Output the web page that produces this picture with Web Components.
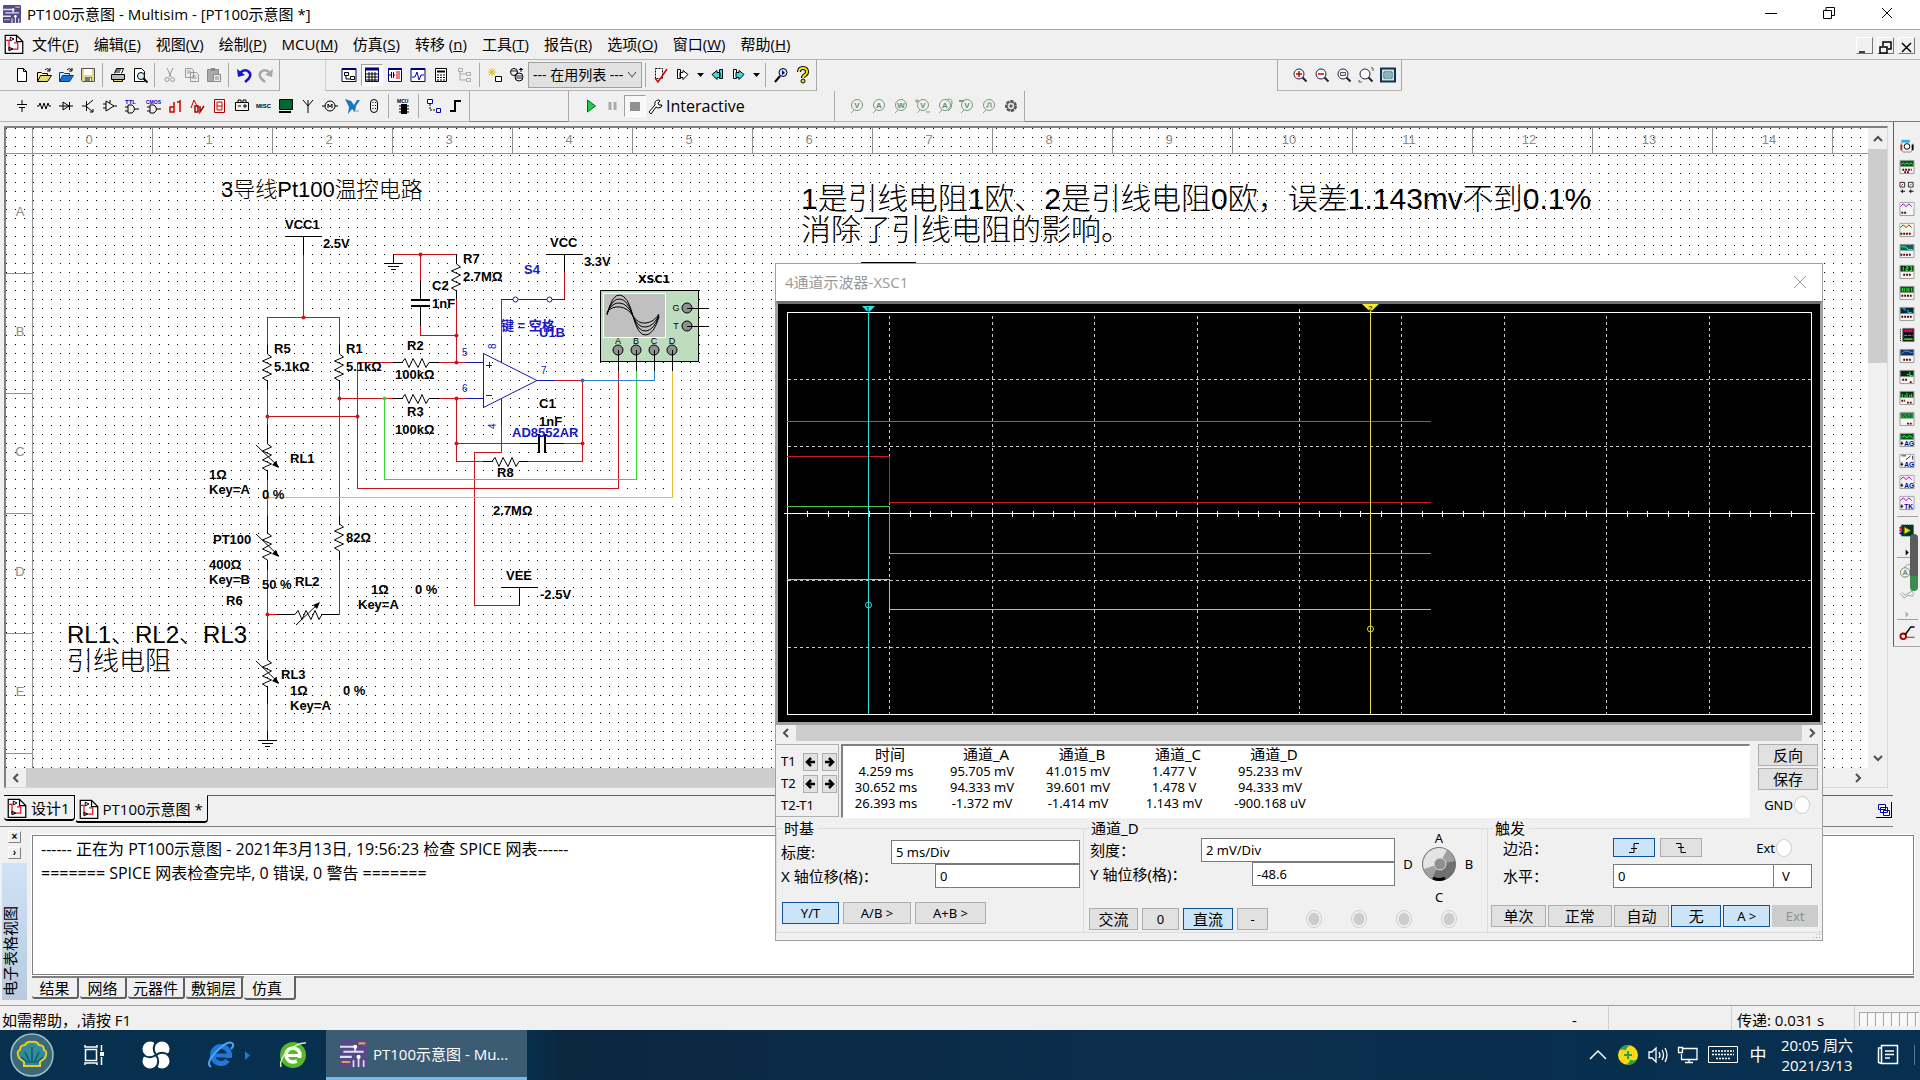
<!DOCTYPE html>
<html lang="zh-CN">
<head>
<meta charset="utf-8">
<title>PT100示意图 - Multisim</title>
<style>
    html, body {
        margin: 0;
        height: 100%;
        overflow: hidden;
    }
    body {
        background-color: #F0F0F0;
        color: #000;
        font: 15px/20px "Open Sans", "Noto Sans CJK SC", sans-serif;
    }
</style>
</head>
<body>
<app-shell></app-shell>

<script>
const S = 'stroke="#000" fill="none"';

/** Small instrument front panel: a screen with terminals or letters below */
const meter = (screen, trace, foot) => `
    <path d="M.5 1.5h15v14h-15z" fill="#F4F4F4" stroke="#999"/>
    <path d="M1 2h14v6H1z" fill="${screen}"/>
    <path d="${trace[0]}" stroke="${trace[1]}" fill="none"/>
    ${foot.length < 3
        ? `<text x="5" y="15" font-size="7" font-weight="700" fill="#00A">${foot}</text><path d="M1 12h3M2.500 10v4" ${S}/>`
        : `<path d="${foot}" stroke="#600" fill="none" stroke-width="2" stroke-dasharray="2 1"/>`}`;

const probe = (letter, extra = '') => `
    <circle cx="8" cy="7" r="5.5" stroke="#7C9A7C" fill="none"/>
    <text x="8" y="10" text-anchor="middle" font-size="8" font-weight="700" fill="#6C8A6C">${letter}</text>
    <path d="M5 12l-3 3" stroke="#999"/>${extra}`;

const zoomIcon = mark => `
    <circle cx="7" cy="7" r="5" fill="#FFF" stroke="#224"/><path d="M10.500 10.500l4 4" stroke="#224" stroke-width="2"/>${mark}`;

const doc = `
    <path d="M1 1h9l5 5v9.500H1z" fill="#FFF" stroke="#000"/><path d="M10 1v5h5" ${S}/>
    <path d="M1 5h3v7h4M8 12h3V7H8" stroke="#E01020" fill="none"/><path d="M5 2.500l3 1.500-3 1.500zM4 10.500l3 1.500-3 1.500z" fill="none" stroke="#000" stroke-width=".800"/>`;

/** 16x16 drawings, by name */
const ICONS = {
    doc,
    chip: `
        <rect width="16" height="16" rx="1" fill="#544A86"/>
        <path d="M0 4h9M2 7h12M0 10h7M9 4v3" stroke="#E6DDF4" stroke-width="1.200"/>
        <path d="M1 13h5M11 2h4" stroke="#E0A060" stroke-width="1.200"/><path d="M8 16v-4M11 16v-6M14 16v-4" stroke="#E6DDF4"/>
        <circle cx="9" cy="4" r="1.200" fill="#FFF"/><circle cx="11" cy="10" r="1.200" fill="#FFF"/>`,
    new: `<path d="M3.500 1.500h6l3 3v10h-9zM9.500 1.500v3h3" fill="#FFF" stroke="#000"/>`,
    open: `<path d="M1.500 14.500v-9h4l1 1h5v2" fill="#FFF6A0" stroke="#000"/><path d="M1.500 14.500l3-6h11l-4 6z" fill="#E4DC78" stroke="#000"/><path d="M9 3q3-3 5 1m0-3v3h-3" ${S}/>`,
    openBlue: `<path d="M1.500 14.500v-9h4l1 1h5v2" fill="#CFE6FF" stroke="#003C8C"/><path d="M1.500 14.500l3-6h11l-4 6z" fill="#1474DC" stroke="#003C8C"/><path d="M9 3q3-3 5 1m0-3v3h-3" ${S}/>`,
    save: `<path d="M1.500 1.500h13v13h-12l-1-1z" fill="#E0D68C" stroke="#555"/><path d="M4 2h8v6H4z" fill="#FFF"/><path d="M5 10h7v4H5z" fill="#777"/><path d="M10 11h1v3h-1z" fill="#FFF"/>`,
    print: `<path d="M4.500 6.500l2-5h7l-2 5" fill="#FFF" stroke="#000"/><path d="M1.500 7.500h13v5h-13z" fill="#BBB" stroke="#000"/><path d="M3.500 12.500h9v2h-9z" fill="#E6D76A" stroke="#000"/><path d="M6 3h5M5 5h5" ${S}/>`,
    preview: `<path d="M2.500 1.500h7l3 3v10h-10z" fill="#FFF" stroke="#000"/><circle cx="9" cy="9" r="3.500" fill="#D8ECF4" stroke="#000"/><path d="M11.500 11.500l4 4" stroke="#000" stroke-width="2"/>`,
    cut: `<path d="M5 1l4 9M11 1L7 10" stroke="#999"/><circle cx="5" cy="12.500" r="2" stroke="#999" fill="none"/><circle cx="10.500" cy="12.500" r="2" stroke="#999" fill="none"/>`,
    copy: `<path d="M1.500 1.500h6l2 2v7h-8zM6.500 5.500h6l2 2v7h-8z" fill="#EEE" stroke="#999"/><path d="M3 4h4M3 6h4M8 9h4M8 11h5" stroke="#999"/>`,
    paste: `<path d="M1.500 2.500h11v12h-11z" fill="#AAA" stroke="#888"/><path d="M5 1h4v3H5z" fill="#888"/><path d="M7.500 7.500h7v7h-7z" fill="#EEE" stroke="#888"/><path d="M9 10h4M9 12h4" stroke="#888"/>`,
    undo: `<path d="M1 2l1 8 7-2z" fill="#1414C8"/><path d="M4 6q5-5 9-1t-4 10" stroke="#1414C8" fill="none" stroke-width="2.500"/>`,
    redo: `<path d="M15 2l-1 8-7-2z" fill="#A8A8A8"/><path d="M12 6q-5-5-9-1t4 10" stroke="#A8A8A8" fill="none" stroke-width="2.500"/>`,
    hierarchy: `<path d="M1 1.500h14v13H1z" fill="#FFF" stroke="#00007C"/><path d="M1 2h14" stroke="#00007C" stroke-width="2"/><path d="M3.500 5.500h4v3h-4zM9.500 9.500h4v3h-4zM5 9v3h4" ${S}/>`,
    grid: `<path d="M1.500 1.500h13v13h-13z" fill="#FFF" stroke="#00007C"/><path d="M1 2h14" stroke="#00007C" stroke-width="3"/><path d="M2 7h12M2 10h12M2 13h12M5 5v9M8 5v9M11 5v9" ${S}/>`,
    database: `<path d="M1.500 1.500h13v13h-13z" fill="#FFF" stroke="#00007C"/><path d="M1 2h14" stroke="#00007C" stroke-width="2"/><path d="M2 8h2M4.500 5v6M6.500 5v6M7 8h1" ${S}/><path d="M9 5h4M9 7h4M9 9h4M9 11h4" stroke="#C00"/>`,
    grapher: `<path d="M1 1.500h14v13H1z" fill="#FFF" stroke="#00007C"/><path d="M1 2h14" stroke="#00007C" stroke-width="2"/><path d="M2 10h3l2-5 2 8 2-5h3" stroke="#00C" fill="none"/>`,
    calc: `<path d="M2.500 1.500h11v13h-11z" fill="#FFF" stroke="#000"/><path d="M4 4.500h8" stroke="#000" stroke-width="2"/><path d="M4 8h8M4 10.500h8M4 13h8" stroke="#000" stroke-dasharray="2 1"/>`,
    tree: `<path d="M2.500 1.500h4v3h-4zM10.500 5.500h4v3h-4zM10.500 11.500h4v3h-4zM4 5v8h6M4 7h6" stroke="#AAA" fill="none"/>`,
    newPart: `<path d="M5 1v8M1 5h8M2 2l6 6M8 2L2 8" stroke="#D8C000"/><path d="M8.500 9.500h6v5h-6z" fill="#FFF" stroke="#000"/>`,
    parts: `<circle cx="5" cy="5" r="3.500" ${S}/><circle cx="10" cy="10" r="4" ${S}/><path d="M2 4h6M7 9h6M7 11h6M12 1v4m-2-2l2-2 2 2" stroke="#224"/>`,
    erc: `<path d="M2.500 1.500h7v10h-7z" fill="#FFF" stroke="#000" stroke-dasharray="2 1"/><path d="M2 11l3 4 9-13" stroke="#D00" stroke-width="1.500" fill="none"/>`,
    forward: `<path d="M2.500 2.500h3v9h-3zM5 5.500h3v-2l5 4-5 5v-2H5z" fill="#FFF" stroke="#000"/>`,
    back: `<path d="M13.500 2.500h-3v9h3zM11 5.500H8v-2l-5 4 5 5v-2h3z" fill="#40D8D8" stroke="#000"/>`,
    forward2: `<path d="M2.500 2.500h3v9h-3z" fill="#FFF" stroke="#000"/><path d="M5 5.500h3v-2l5 4-5 5v-2H5z" fill="#40D8D8" stroke="#000"/>`,
    find: `<circle cx="10" cy="5.500" r="4" fill="#CFE4F4" stroke="#000"/><path d="M7 9l-5 6" stroke="#000" stroke-width="2"/><path d="M9 3v5l3-2z" fill="#00A"/>`,
    help: `<path d="M4 5q0-4 4-4t4 4q0 2-2 3t-2 3" stroke="#000" stroke-width="4" fill="none"/><path d="M4 5q0-4 4-4t4 4q0 2-2 3t-2 3" stroke="#F4E410" stroke-width="2" fill="none"/><circle cx="8" cy="14" r="2" fill="#F4E410" stroke="#000"/>`,
    zoomIn: zoomIcon('<path d="M4 7h6M7 4v6" stroke="#C00" stroke-width="1.500"/>'),
    zoomOut: zoomIcon('<path d="M4 7h6" stroke="#C00" stroke-width="1.500"/>'),
    zoomArea: zoomIcon('<path d="M4.500 5.500h5v3h-5z" fill="#DDD" stroke="#555"/>'),
    zoomFit: zoomIcon('<path d="M13 1h2v3M1 13v2h3" stroke="#555" fill="none"/>'),
    fullScreen: `<path d="M1 1.500h14v13H1z" fill="#CDE" stroke="#134" stroke-width="2"/><path d="M4 5h8v6H4z" fill="#FFF" stroke="#266"/><path d="M5 7h6M5 9h6" stroke="#266"/>`,
    source: `<path d="M8 2v4M3 6.500h10M5 9.500h6M8 10v4" ${S}/>`,
    basic: `<path d="M1 8h2l1-3 2 6 2-6 2 6 2-6 1 3h2" ${S}/>`,
    diode: `<path d="M1 8h14M5 4v8l6-4zM11.500 4v8" ${S}/>`,
    transistor: `<path d="M2 8h4M6.500 3v10M7 7l6-5M7 9l6 5m0-3v3h-3" ${S}/>`,
    analog: `<path d="M4 3v10l8-5zM1 6h3M1 10h3M12 8h3M8 2v3" ${S}/>`,
    ttl: `<text x="1" y="6" font-size="6" font-weight="700" fill="#00C">TTL</text><path d="M4 7v8h4q5-4 0-8zM1 9h3M1 13h3M11 11h4" ${S}/>`,
    cmos: `<text x="0" y="6" font-size="5" font-weight="700" fill="#00C">CMOS</text><path d="M4 7v8h4q5-4 0-8zM1 9h3M1 13h3M11 11h4" ${S}/>`,
    digital: `<path d="M2 9h4v5H2zM6 4v10M9 4h3v10M12 2v12" stroke="#C00" stroke-width="1.500" fill="none"/>`,
    mixed: `<path d="M1 10l3-8 4 8" stroke="#C00" fill="none"/><path d="M5 8h3v6H5zM10 8v6l4-6" stroke="#A00" stroke-width="1.500" fill="none"/>`,
    indicator: `<path d="M2.500 1.500h10v13h-10z" fill="#FFF" stroke="#A00"/><path d="M5 4h5v8H5zM5 8h5" stroke="#C00" fill="none"/>`,
    power: `<path d="M1.500 4.500h13v8h-13zM4 4V2h3v2M9 4V2h3v2M4 8h3M9 8h4M11 6v4" ${S}/>`,
    misc: `<text x="0" y="10" font-size="6" font-weight="700">MISC</text>`,
    peripheral: `<path d="M1.500 1.500h13v10h-13z" fill="#063" stroke="#000"/><path d="M1 14h12" stroke="#000" stroke-width="2"/>`,
    rf: `<path d="M8 15V2M3 2l5 6 5-6" ${S}/>`,
    motor: `<circle cx="8" cy="8" r="5" ${S}/><path d="M0 8h3M13 8h3M6 10V6l2 3 2-3v4" ${S}/>`,
    ni: `<path d="M1 1l6 2 3 4 3-5h3l-4 6-1 6-3-3-4 5 1-7z" fill="#1878C0"/><path d="M9 13h6" stroke="#999"/>`,
    connector: `<rect x="4.500" y="1.500" width="7" height="13" rx="3.500" ${S}/><path d="M7 4v9M9.500 4v9" stroke="#000" stroke-dasharray="1 2"/>`,
    mcu: `<text x="1" y="5" font-size="5" font-weight="700">MCU</text><path d="M5 6h6v10H5z"/><path d="M3 8h2M3 11h2M3 14h2M11 8h2M11 11h2M11 14h2" ${S}/>`,
    block: `<path d="M1.500 1.500h5v4h-5zM10.500 10.500h4v4h-4z" fill="#FFF" stroke="#00A"/><path d="M4 6v6h6" stroke="#000" stroke-dasharray="2 1" fill="none"/>`,
    bus: `<path d="M2 13h5V3h6" stroke="#000" stroke-width="2" fill="none"/>`,
    play: `<path d="M4.500 2v12l8-6z" fill="#18D048" stroke="#063"/>`,
    pause: `<path d="M5 4v8M10 4v8" stroke="#AAA" stroke-width="3"/>`,
    stop: `<path d="M3 4h10v9H3z" fill="#909090"/>`,
    wrench: `<path d="M2 14l6-7q-1-4 3-5 2 0 2 1l-2 2 1 2h3q0 3-4 3l-2-1-5 7z" fill="#FFF" stroke="#000"/>`,
    probeV: probe('V'), probeA: probe('A'), probeW: probe('W'),
    probeVV: probe('V', '<path d="M0 3h4M2 1v4M11 14h4" stroke="#7C9A7C"/>'),
    probeVA: probe('A', '<path d="M10 2q5-3 5 3t-4 8" stroke="#7C9A7C" fill="none"/>'),
    probeRef: probe('V', '<path d="M0 3h5" stroke="#7C9A7C" stroke-width="2"/>'),
    probeDig: probe('', '<path d="M5 9h2V5h3v4h1" stroke="#6C8A6C" fill="none"/>'),
    gear: `<circle cx="8" cy="8" r="4.500" fill="#CCC" stroke="#555" stroke-width="3" stroke-dasharray="3 1"/><circle cx="8" cy="8" r="4" fill="#DDD" stroke="#555"/><circle cx="8" cy="8" r="1.500" fill="#555"/>`,
    multimeter: `<path d="M2 2h9v3H2z" fill="#2CB0E0"/><path d="M2 5q-1 9 2 10h8q3-2 2-9" fill="#EEE" stroke="#888"/><circle cx="8" cy="9" r="3" fill="#FFF" stroke="#000"/><path d="M2 7v6" stroke="#D02020" stroke-width="2"/><path d="M14 7v6" stroke="#000" stroke-width="2"/>`,
    fgen: meter('#085020', ['M2 6l2-2 2 2 2-2 2 2 2-2 2 2', '#4F4'], 'M3 11.500h10M5 14h6'),
    wattmeter: `<path d="M.5 2.500h5v5h-5zM9.500 2.500h5v5h-5z" fill="#FFF" stroke="#222"/><path d="M2 6l2-2M11 6l2-2" stroke="#A00"/><path d="M1 12h5M10 12h5M3 10v4M12 10v4" ${S}/>`,
    scope: meter('#F4F0FF', ['M1 6l3-3 3 3 3-3 3 3', '#80A'], 'M2 12.500h6'),
    scope4: meter('#E4FFE4', ['M1 6l3-3 3 3 3-3 3 3', '#C00'], 'M1 12.500h12'),
    bode: meter('#0A6060', ['M2 4h4l4 3h4', '#4F8'], 'M1 12.500h12'),
    counter: meter('#063018', ['M4 3v4M7 3h2v2H7v2h2M11 3h2v4h-2', '#4F4'], 'M4 11.500h8'),
    wordgen: meter('#084018', ['M3 3v4M5 3v4M8 3v4M10 3v4M13 3v4', '#4F4'], 'M2 11.500h11'),
    converter: meter('#062830', ['M3 3h3v2M9 4v3h4', '#3CF'], 'M2 11.500h11'),
    logic: `<path d="M3.500 1.500h12v14h-12z" fill="#111" stroke="#777"/><path d="M5 4h9" stroke="#D06" stroke-width="3"/><path d="M5 9h9" stroke="#0CC" stroke-dasharray="3 1"/><path d="M5 13h9" stroke="#3C3" stroke-width="2"/><path d="M1 2v13" stroke="#000" stroke-dasharray="1 1"/>`,
    iv: meter('#183060', ['M2 6l4-3 8 2', '#4AF'], 'M4 12.500h9'),
    distortion: meter('#062810', ['M8 6h2M11 3v4h3', '#4F4'], 'M3 11.500h6M11 14h3'),
    spectrum: meter('#062810', ['M3 8V4M6 8V5M8 8V3M11 8V5M13 8V4', '#4F4'], 'M2 11.500h4M8 13.500h5'),
    network: meter('#2C8C3C', ['M3 3l3 4M7 3l3 4M12 3v4', '#052'], 'M8 13.500h6'),
    agFgen: meter('#085020', ['M2 6l3-2 3 2 3-2 3 2', '#4F4'], 'AG'),
    agMeter: meter('#FFF', ['M2 3h5M7 7l5-4M14 3v4', '#224'], 'AG'),
    agScope: meter('#F4E8FF', ['M1 6l3-3 3 3 3-3 3 3', '#A0A'], 'AG'),
    tkScope: meter('#F4E8FF', ['M1 6l3-3 3 3 3-3 3 3', '#A0A'], 'TK'),
    labview: `<path d="M2 2h13v12H2z" fill="#032" stroke="#088" stroke-dasharray="1 1"/><path d="M5 4v8l7-4z" fill="#F4E410" stroke="#660"/><path d="M0 5h3M0 8h2" stroke="#C00" stroke-width="2"/><path d="M0 11h3" stroke="#00C" stroke-width="2"/>`,
    more: `<path d="M5 1v14l7-7z"/>`,
    moreOff: `<path d="M5 1v14l7-7z" fill="#AAA"/>`,
    probeGrey: `<circle cx="10" cy="5" r="4.500" fill="none" stroke="#8A8"/><circle cx="6" cy="9" r="5" fill="#EEF4EE" stroke="#686"/><text x="6" y="12" text-anchor="middle" font-size="8" font-weight="700" fill="#686">A</text>`,
    clamp: `<path d="M1 9l4 5 4-3 5 1 1-3-3-4M3 8l3 3 8-5" fill="none" stroke="#A0A0A0"/>`,
    current: `<circle cx="4" cy="11" r="3" fill="none" stroke="#A00" stroke-width="2"/><path d="M6 9l4-5 2-3h4" stroke="#000" stroke-width="1.500" fill="none"/><path d="M7 12h9" stroke="#C00"/>`
};

const svg = name => `<svg width="100%" height="100%" viewBox="0 0 16 16" font-family="Liberation Sans, sans-serif">${ICONS[name]}</svg>`;

/** Base for the elements: puts style and template in an open shadow root */
class BaseElement extends HTMLElement {
    connectedCallback() {
        this.root = this.attachShadow({mode: 'open'});
        this.root.innerHTML = `<style>*{box-sizing:border-box}${this.style_}</style>${this.template}`;
    }
    get style_() { return ''; }
    get template() { return '<slot></slot>'; }
}

/**
 * One icon button of a tool bar
 */
class ToolButton extends BaseElement {
    get style_() {
        return `
            :host {
                display: block;
                width: 22px;
                height: 22px;
            }
            button {
                display: block;
                width: 100%;
                height: 100%;
                padding: 2px;
                border: 1px solid transparent;
                background: none;
            }
            svg { overflow: visible; }
            :host([pressed]) button {
                border-color: #A0A0A0 #FFF #FFF #A0A0A0;
                background-color: #F8F8F8;
            }
            :host([narrow]) { width: 12px; }
            :host([narrow]) button { padding: 0; font-size: 8px; line-height: 20px; }
        `;
    }
    get template() {
        const icon = this.getAttribute('icon');
        return `<button aria-label="${icon || '▾'}">${icon ? svg(icon) : '<svg width="7" height="4"><path d="M0 0h7L3.500 4z"/></svg>'}</button>`;
    }
}
customElements.define('tool-button', ToolButton);

/**
 * A docked tool bar
 */
class ToolBar extends BaseElement {
    get style_() {
        return `
            :host {
                display: flex;
                align-items: center;
                height: 31px;
                padding: 0 2px 0 11px;
                border-right: 1px solid #A8A8A8;
                border-bottom: 1px solid #B4B4B4;
                box-sizing: border-box;
            }
            ::slotted(hr) {
                width: 1px;
                height: 24px;
                margin: 0 4px 0 3px;
                border: 0;
                background-color: #A8A8A8;
            }
        `;
    }
}
customElements.define('tool-bar', ToolBar);

/**
 * Caption bar of the application
 */
class TitleBar extends BaseElement {
    get style_() {
        return `
            :host {
                display: flex;
                align-items: center;
                height: 30px;
                padding: 0 4px 1px 3px;
                background-color: #FFF;
                border-bottom: 1px solid #A8A8A8;
            }
            .icon { width: 18px; height: 18px; margin-right: 6px; }
            .title { flex: 1; }
            button {
                width: 58px;
                height: 28px;
                padding: 0;
                border: 0;
                background: none;
            }
        `;
    }
    get template() {
        const b = (label, d) => `<button aria-label="${label}"><svg width="12" height="12"><path d="${d}" ${S}/></svg></button>`;
        return `
            <div class="icon">${svg('chip')}</div>
            <div class="title"><slot></slot></div>
            ${b('最小化', 'M0 6.500h12')}
            ${b('还原', 'M.5 3.500h8v8h-8zM3 3V.5h8.500v8H9')}
            ${b('关闭', 'M1 1l10 10M11 1L1 11')}
        `;
    }
}
customElements.define('title-bar', TitleBar);

/**
 * Menu bar; items given as "text|accelerator"
 */
class MenuBar extends BaseElement {
    get style_() {
        return `
            :host {
                display: flex;
                align-items: center;
                height: 30px;
                padding: 0 5px 2px 4px;
                border-bottom: 1px solid #B4B4B4;
                box-sizing: border-box;
            }
            .icon { width: 20px; height: 20px; margin-right: 8px; }
            nav { display: flex; flex: 1; gap: 15px; }
            button {
                padding: 0;
                border: 0;
                background: none;
                font: inherit;
            }
            .mdi {
                width: 17px;
                height: 17px;
                margin: 4px 0 0 4px;
                border: 1px solid;
                border-color: #FFF #777 #777 #FFF;
            }
        `;
    }
    get template() {
        const items = ['文件(|F', '编辑(|E', '视图(|V', '绘制(|P', 'MCU(|M', '仿真(|S', '转移 (|n', '工具(|T', '报告(|R', '选项(|O', '窗口(|W', '帮助(|H']
            .map(item => item.split('|'))
            .map(([text, key]) => `<button>${text}<u>${key}</u>)</button>`).join('');
        const b = (label, d) => `<button class="mdi" aria-label="${label}"><svg width="13" height="13"><path d="${d}" ${S} stroke-width="1.500"/></svg></button>`;
        return `
            <div class="icon">${svg('doc')}</div>
            <nav>${items}</nav>
            ${b('最小化', 'M1 11h6')}
            ${b('还原', 'M1 6h7v6H1zM4 5V1h8v7H9')}
            ${b('关闭', 'M2 2l9 9M11 2l-9 9')}
        `;
    }
}
customElements.define('menu-bar', MenuBar);

/**
 * The two rows of docked tool bars
 */
class ToolRows extends BaseElement {
    get style_() {
        return `
            :host { display: block; border-bottom: 1px solid #808080; height: 62px; }
            .row { display: flex; }
            .row + .row { height: 30px; }
            .gap1 { margin-left: 45px; padding-left: 12px; border-left: 1px solid #D0D0D0; }
            .gap2 { margin-left: 460px; border-left: 1px solid #A8A8A8; }
            .gap3 { margin-left: 98px; border-left: 1px solid #A8A8A8; width: 267px; }
            .wide { display: flex; gap: 1px; margin-right: 1px; }
            .list { display: grid; align-items: center; justify-items: end; }
            .list > * { grid-area: 1 / 1; }
            .list svg { margin-right: 5px; pointer-events: none; }
            select {
                appearance: none;
                width: 114px;
                height: 26px;
                padding: 0 4px;
                border: 1px solid #A0A0A0;
                background-color: #E1E1E1;
                font: 14px/20px "Open Sans", "Noto Sans CJK SC", sans-serif;
            }
            .mode { display: flex; align-items: center; gap: 2px; padding: 0; border: 0; background: none; font: 16px/20px "Open Sans", sans-serif; }
            .mode span { width: 18px; height: 16px; line-height: 0; }
        `;
    }
    get template() {
        const set = names => names.split(' ').map(name => name === '|' ? '<hr>'
            : name === '^' ? '<tool-button narrow></tool-button>'
            : `<tool-button icon="${name}"${name === 'grid' || name === 'stop' ? ' pressed' : ''}></tool-button>`).join('');
        return `
            <div class="row">
                <tool-bar>${set('new open openBlue save | print preview | cut copy paste | undo redo')}</tool-bar>
                <tool-bar class="gap1">
                    <div class="wide">${set('hierarchy grid database grapher calc tree')}</div>
                    ${set('| newPart parts')}
                    <div class="list">
                        <select aria-label="在用列表"><option>--- 在用列表 ---</option></select>
                        <svg width="10" height="6"><path d="M1 0l4 5 4-5" stroke="#444" fill="none"/></svg>
                    </div>
                    ${set('| erc forward ^ back forward2 ^ | find help')}
                </tool-bar>
                <tool-bar class="gap2">${set('zoomIn zoomOut zoomArea zoomFit fullScreen')}</tool-bar>
            </div>
            <div class="row">
                <tool-bar>${set('source basic diode transistor analog ttl cmos digital mixed indicator power misc peripheral rf motor ni connector | mcu | block bus')}</tool-bar>
                <tool-bar class="gap3">
                    ${set('play pause stop')}
                    <button class="mode"><span>${svg('wrench')}</span>Interactive</button>
                </tool-bar>
                <tool-bar>${set('probeV probeA probeW probeVV probeVA probeRef probeDig gear')}</tool-bar>
            </div>
        `;
    }
}
customElements.define('tool-rows', ToolRows);

/**
 * Instrument bar at the right edge
 */
class InstrumentBar extends BaseElement {
    get style_() {
        return `
            :host {
                position: relative;
                display: flex;
                flex-direction: column;
                align-items: center;
                width: 27px;
                height: 525px;
                padding-top: 13px;
                border-left: 1px solid #606060;
                border-bottom: 1px solid #A8A8A8;
                box-sizing: border-box;
            }
            tool-button { flex: none; height: 21px; }
            tool-button[small] { height: 13px; }
            hr { flex: none; width: 21px; height: 1px; margin: 3px 0; border: 0; background-color: #A0A0A0; }
            .level {
                position: absolute;
                right: 2px;
                top: 412px;
                width: 8px;
                height: 57px;
                border-radius: 4px;
                background: linear-gradient(#5C5C5C 42px, #3C8C50 42px);
            }
        `;
    }
    get template() {
        const set = names => names.split(' ').map(name => name === '|' ? '<hr>'
            : `<tool-button icon="${name}"${name.startsWith('more') ? ' small' : ''}></tool-button>`).join('');
        return `${set('multimeter fgen wattmeter scope scope4 bode counter wordgen converter logic iv distortion spectrum network agFgen agMeter agScope tkScope | labview more | probeGrey clamp moreOff | current')}
            <div class="level"></div>`;
    }
}
customElements.define('instrument-bar', InstrumentBar);

/**
 * Scroll bar, horizontal unless it has the vertical attribute.
 * rest gives the free track after the thumb.
 */
class ScrollTrack extends BaseElement {
    get style_() {
        return `
            :host { display: flex; background-color: #F0F0F0; }
            :host([vertical]) { flex-direction: column; }
            button {
                flex: none;
                width: 20px;
                height: 100%;
                padding: 0;
                border: 0;
                background: none;
                line-height: 0;
            }
            :host([vertical]) button { width: 100%; height: 21px; }
            .thumb { flex: 1; background-color: #CDCDCD; }
            .rest { flex: none; flex-basis: ${this.getAttribute('rest') || 0}; }
        `;
    }
    get template() {
        const v = this.hasAttribute('vertical');
        const b = (label, d) => `<button aria-label="${label}"><svg width="12" height="12"><path d="${d}" stroke="#505050" stroke-width="2" fill="none"/></svg></button>`;
        return `
            ${v ? b('上', 'M2 8l4-4 4 4') : b('左', 'M8 2L4 6l4 4')}
            <div class="thumb"></div><div class="rest"></div>
            ${v ? b('下', 'M2 4l4 4 4-4') : b('右', 'M4 2l4 4-4 4')}
        `;
    }
}
customElements.define('scroll-track', ScrollTrack);

/**
 * Drawing sheet with rulers, grid dots and the circuit
 */
class SchematicSheet extends BaseElement {
    get style_() {
        return `
            :host { display: block; overflow: hidden; background-color: #FFF; }
            svg { display: block; width: 100%; height: 100%; }
            .ruler { font: 13px "Liberation Sans", sans-serif; fill: #8C8C8C; text-anchor: middle; }
            .part { font: bold 13px "Liberation Sans", "Noto Sans CJK SC", sans-serif; }
            .note { font: 300 22px "Liberation Sans", "Noto Sans CJK SC", sans-serif; }
            .pin { font: 10px "Liberation Sans", sans-serif; fill: #1414A0; }
            .term { font: 9px "Liberation Sans", sans-serif; text-anchor: middle; }
            .w, .b, .u, .r { fill: none; shape-rendering: crispEdges; }
            .r { stroke: #909090; }
            .w { stroke: #C8141E; }
            .b { stroke: #000; }
            .u { stroke: #1818B0; }
            .z { fill: none; stroke: #000; }
        `;
    }

    /** Resistor zigzags, 27px long */
    rv(x, y) { return `<path class="z" d="M${x}.5 ${y}l4 3l-9 4l9 4l-9 5l9 4l-9 4l5 3"/>`; }
    rh(x, y) { return `<path class="z" d="M${x} ${y}.5l3 -4l4 9l4 -9l5 9l4 -9l4 9l3 -5"/>`; }

    /** Arrow over a variable resistor */
    pot(x, y) { return this.rv(x, y) + `<path class="z" d="M${x - 11} ${y + 1}l23 22"/><path d="M${x + 12} ${y + 24}l-7-3 4-4z"/>`; }

    dots(points, colour) {
        return points.map(([x, y]) => `<circle cx="${x}.5" cy="${y}.5" r="2" fill="${colour}"/>`).join('');
    }

    get rulers() {
        let out = '<path class="r" d="M6 153.500H1868M32.500 128V768"/>';
        for (let i = 0; i < 15; i++) {
            out += `<path class="r" d="M${152.5 + 120 * i} 128V153"/><text class="ruler" x="${89 + 120 * i}" y="144">${i}</text>`;
        }
        'ABCDE'.split('').forEach((letter, i) => {
            out += `<path class="r" d="M6 ${273.5 + 120 * i}H32"/><text class="ruler" x="20" y="${216 + 120 * i}">${letter}</text>`;
        });
        return out;
    }

    get labels() {
        return [
            [285, 229, 'VCC1'], [323, 248, '2.5V'], [274, 353, 'R5'], [274, 371, '5.1kΩ'], [346, 353, 'R1'], [346, 371, '5.1kΩ'],
            [432, 290, 'C2'], [432, 308, '1nF'], [463, 263, 'R7'], [463, 281, '2.7MΩ'], [407, 350, 'R2'], [395, 379, '100kΩ'],
            [407, 416, 'R3'], [395, 434, '100kΩ'], [550, 247, 'VCC'], [584, 266, '3.3V'], [539, 408, 'C1'], [539, 426, '1nF'],
            [497, 477, 'R8'], [493, 515, '2.7MΩ'], [290, 463, 'RL1'], [209, 479, '1Ω'], [209, 494, 'Key=A'], [262, 499, '0 %'],
            [213, 544, 'PT100'], [209, 569, '400Ω'], [209, 584, 'Key=B'], [262, 589, '50 %'], [295, 586, 'RL2'], [226, 605, 'R6'],
            [346, 542, '82Ω'], [371, 594, '1Ω'], [415, 594, '0 %'], [358, 609, 'Key=A'], [281, 679, 'RL3'], [290, 695, '1Ω'],
            [343, 695, '0 %'], [290, 710, 'Key=A'], [506, 580, 'VEE'], [540, 599, '-2.5V']
        ].map(([x, y, text]) => `<text class="part" x="${x}" y="${y}">${text}</text>`).join('') + [
            [524, 274, 'S4'], [501, 330, '键 = 空格'], [539, 337, 'U1B'], [512, 437, 'AD8552AR']
        ].map(([x, y, text]) => `<text class="part" x="${x}" y="${y}" fill="#1818C8">${text}</text>`).join('');
    }

    get template() {
        const terminals = [['A', 618], ['B', 636], ['C', 654], ['D', 672]].map(([name, x]) => `
            <circle cx="${x}" cy="350" r="5" fill="#909090" stroke="#000"/><path class="b" d="M${x}.5 350V371"/><text class="term" x="${x}" y="344">${name}</text>`).join('');
        const side = [['G', 308], ['T', 326]].map(([name, y]) => `
            <circle cx="687" cy="${y}" r="5" fill="#909090" stroke="#000"/><path class="b" d="M687 ${y}.5H709"/><text class="term" x="676" y="${y + 3}">${name}</text>`).join('');
        const waves = [0, 4, 8, 12].map(d => `<path class="z" d="M607 ${315 - d / 4}Q612 ${294 + d} 620 ${295 + d}T633 316Q638 ${336 - d} 646 ${335 - d}T659 ${317 - d / 4}"/>`).join('');
        return `
            <svg><g transform="translate(-6 -128)">
                <defs><pattern id="grid" width="9" height="9" patternUnits="userSpaceOnUse"><rect x="6" y="2" width="1" height="1"/></pattern></defs>
                <rect x="6" y="128" width="1857" height="640" fill="url(#grid)"/>
                ${this.rulers}
                <path class="b" d="M861 262.500H916"/>

                <path class="b" d="M285 236.500H322M303.500 236V255M267.500 345V354M267.500 381V390M339.500 345V354M339.500 381V390"/>
                <path class="w" d="M303.500 255V317M267.500 345V317.500H339.500V345M267.500 390V425M339.500 390V516M267 416.500H357M357.500 488V362.500H393M339 398.500H393"/>
                <path class="w" d="M357 488.500H618.500V371"/>
                <path class="b" d="M267.500 425V444M267.500 471V480M267.500 516V533M267.500 560V570M267.500 640V659M267.500 686V704M267.500 731V740M258 740.500H277M262 743.500H273M265 746.500H270"/>
                <path class="w" d="M267.500 480V516M267.500 570V640M267.500 704V731M267 614.500H277M331 614.500H339.500V559"/>
                <path class="b" d="M339.500 516V525M339.500 551V560M277 614.500H295M321 614.500H339"/>
                ${this.rv(267, 354)}${this.rv(339, 354)}${this.rv(339, 524)}
                ${this.pot(267, 444)}${this.pot(267, 533)}${this.pot(267, 660)}
                ${this.rh(295, 614)}<path class="z" d="M296 625l23-22"/><path d="M320 602l-7 3 4 4z"/>

                <path class="w" d="M393 254.500H456.500M420.500 254V281M420.500 326V335.500H456M456.500 299V362M439 362.500H466M439 398.500H466M456.500 398V461.500H483M456 443.500H520M564 443.500H582M528 461.500H582.500V380.500H555"/>
                <path class="b" d="M393.500 254V263M384 263.500H403M388 266.500H399M391 269.500H396M420.500 281V300M420.500 307V326M456.500 254V264M456.500 291V299M393 362.500H402M429 362.500H439M393 398.500H402M429 398.500H439M520 443.500H539M546 443.500H564M483 461.500H492M519 461.500H528"/>
                <path class="b" stroke-width="2" d="M411 300H430M411 306H430M539 434V453M545 434V453"/>
                ${this.rv(456, 264)}${this.rh(402, 362)}${this.rh(402, 398)}${this.rh(492, 461)}
                <path class="w" d="M501.500 336V299M564.500 272V299M501.500 426V452.500H474.500V605.500H519"/>
                <path class="b" d="M546 254.500H583M564.500 254V272M501 587.500H537M519.500 587V605"/>
                <path class="u" d="M466 362.500H483M466 398.500H483M537 380.500H555M501.500 336V362M501.500 398V426M501 299.500H513M518 299.500H547M552 299.500H564M486 365.500H492M489.500 362V368M486 395.500H492"/>
                <path d="M483.500 353.500V407.500L537 380.500z" fill="none" stroke="#1818B0"/>
                <circle cx="515.500" cy="299.500" r="2.500" fill="#FFF" stroke="#1818B0"/><circle cx="549.500" cy="299.500" r="2.500" fill="#FFF" stroke="#1818B0"/>
                <text class="pin" x="462" y="356">5</text><text class="pin" x="462" y="392">6</text><text class="pin" x="541" y="374" font-style="italic">7</text>
                <text class="pin" transform="translate(496 349) rotate(-90)">8</text><text class="pin" transform="translate(496 429) rotate(-90)">4</text>

                <path class="w" style="stroke:#3CD43C" d="M384.500 398V479.500H636.500V371"/>
                <path class="w" style="stroke:#E8BC30" d="M267 497.500H672.500V371"/>
                <path class="w" style="stroke:#2C80D0" d="M582 380.500H654.500V371"/>
                ${this.dots([[303, 317], [267, 416], [357, 416], [339, 398], [267, 614], [420, 254], [456, 335], [456, 362], [456, 398], [456, 443], [582, 443]], '#D0141E')}
                ${this.dots([[384, 398]], '#3CD43C')}${this.dots([[267, 497]], '#F09020')}${this.dots([[582, 380]], '#2C70C8')}

                <rect x="600.500" y="290.500" width="98" height="71" fill="#BEDCBE" stroke="#000"/>
                <rect x="603.500" y="293.500" width="62" height="44" fill="#C0C0C0" stroke="#FFF"/>
                ${waves}${terminals}${side}
                <text x="638" y="283" style="font:bold 11px DejaVu Sans,sans-serif">XSC1</text>
                ${this.labels}

                <text class="note" x="221" y="197">3导线Pt100温控电路</text>
                <text class="note" x="801" y="209" style="font-size:30px">1是引线电阻1欧、2是引线电阻0欧，误差1.143mv不到0.1%</text>
                <text class="note" x="801" y="240" style="font-size:30px">消除了引线电阻的影响。</text>
                <text class="note" x="67" y="643" style="font-size:24px">RL1、RL2、RL3</text>
                <text class="note" x="67" y="670" style="font-size:26px">引线电阻</text>
            </g></svg>
        `;
    }
}
customElements.define('schematic-sheet', SchematicSheet);

/**
 * Tabs of the open designs
 */
class DesignTabs extends BaseElement {
    get style_() {
        return `
            :host { display: flex; height: 32px; padding-left: 4px; box-sizing: border-box; border-bottom: 1px solid #808080; }
            button {
                display: flex;
                align-items: center;
                gap: 4px;
                height: 26px;
                padding: 0 4px 0 3px;
                border: 0 solid #000;
                border-width: 1px 1px 2px 0;
                border-radius: 0 0 4px 4px;
                background: none;
                font: inherit;
            }
            .active { height: 28px; border-top-color: transparent; border-left: 1px solid #FFF; }
            span { width: 20px; height: 20px; }
            .rest { flex: 1; border-top: 1px solid #606060; border-right: 1px solid #606060; height: 1px; }
            .list { width: 16px; height: 16px; margin: 7px 1px 0 -17px; padding: 1px; border-width: 0 1px 1px 0; border-radius: 0; }
        `;
    }
    get template() {
        return `
            <button><span>${svg('doc')}</span>设计1</button>
            <button class="active"><span>${svg('doc')}</span>PT100示意图 *</button>
            <div class="rest"></div>
            <button class="list" aria-label="窗口列表"><svg width="13" height="13"><path d="M1.500 1.500h7v5h-7zM3.500 4.500h7v5h-7zM6.500 7.500h6v5h-6z" fill="#FFF" stroke="#00A"/></svg></button>
        `;
    }
}
customElements.define('design-tabs', DesignTabs);

/**
 * Spreadsheet view docked at the bottom
 */
class SpreadsheetView extends BaseElement {
    get style_() {
        return `
            :host { display: flex; height: 179px; box-sizing: border-box; border-bottom: 1px solid #A0A0A0; }
            .side { display: flex; flex-direction: column; align-items: center; width: 30px; padding: 4px 3px 5px 2px; }
            .side button {
                width: 13px;
                height: 12px;
                margin: 0 0 4px;
                padding: 0;
                border: 1px solid;
                border-color: #FFF #808080 #808080 #FFF;
                background: none;
                font: bold 10px/8px "Liberation Sans", sans-serif;
            }
            .caption {
                flex: 1;
                width: 25px;
                padding-top: 4px;
                background: linear-gradient(#B8CADC, #CFE2F6);
                writing-mode: vertical-rl;
                text-orientation: sideways;
                transform: rotate(180deg);
                line-height: 17px;
            }
            .main { flex: 1; display: flex; flex-direction: column; padding: 8px 6px 6px 2px; }
            .log { flex: 1; border: 1px solid #808080; outline: 1px solid #FFF; padding: 1px 8px; background-color: #FFF; font-size: 16px; line-height: 24px; white-space: pre; }
            .tabs { display: flex; gap: 1px; margin-top: 1px; border-top: 2px solid #808080; }
            .tabs button { height: 21px; min-width: 47px; padding: 0 5px; border: 0 solid #606060; border-width: 0 2px 2px 0; border-radius: 0 0 3px 3px; background: none; font: inherit; line-height: 18px; }
            .tabs .active { height: 24px; margin: -2px 0 -3px; padding: 2px 12px 0 8px; background-color: #F0F0F0; }
        `;
    }
    get template() {
        return `
            <div class="side">
                <button aria-label="关闭">×</button><button aria-label="展开">›</button>
                <div class="caption">电子表格视图</div>
            </div>
            <div class="main">
                <div class="log">------ 正在为 PT100示意图 - 2021年3月13日, 19:56:23 检查 SPICE 网表------
======= SPICE 网表检查完毕, 0 错误, 0 警告 =======</div>
                <div class="tabs"><button>结果</button><button>网络</button><button>元器件</button><button>敷铜层</button><button class="active">仿真</button></div>
            </div>
        `;
    }
}
customElements.define('spreadsheet-view', SpreadsheetView);

/**
 * Status line
 */
class StatusLine extends BaseElement {
    get style_() {
        return `
            :host { display: flex; height: 24px; padding-right: 1px; line-height: 28px; }
            .help { flex: 1; padding-left: 2px; }
            div { border-right: 1px solid #D0D0D0; }
            .help { border: 0; }
            .dash { width: 71px; padding-left: 34px; }
            .empty { width: 123px; }
            .time { width: 123px; padding-left: 5px; }
            .bar { width: 60px; margin: 6px 0 4px 4px; border: 0; background: repeating-linear-gradient(90deg, #A8A8A8 0 1px, #F8F8F8 1px 7px, #F0F0F0 7px 8px); border-top: 1px solid #A8A8A8; }
        `;
    }
    get template() {
        return `<div class="help">如需帮助，,请按 F1</div><div class="dash">-</div><div class="empty"></div><div class="time">传递: 0.031 s</div><div class="bar"></div>`;
    }
}
customElements.define('status-line', StatusLine);

/**
 * Windows task bar
 */
class TaskBar extends BaseElement {
    get style_() {
        return `
            :host { display: flex; align-items: center; height: 50px; background: linear-gradient(90deg, #07304E 0 527px, #0B2740 560px, #0B2E4C 1100px, #072F4F); color: #FFF; }
            button { flex: none; height: 50px; padding: 0; border: 0; background: none; color: inherit; font: inherit; line-height: 0; }
            svg { overflow: visible; }
            .start { width: 64px; }
            .app { width: 60px; }
            .app.s { width: 64px; }
            .app.e { width: 66px; }
            .app.g { width: 72px; padding-left: 6px; }
            .task { display: flex; align-items: center; gap: 6px; width: 201px; padding-left: 14px; border-bottom: 3px solid #76B9ED; background-color: #3B5C72; line-height: 20px; }
            .task span { width: 27px; height: 27px; }
            .space { flex: 1; }
            .tray { width: 30px; }
            .tray.wide { width: 40px; }
            .ime { width: 30px; font-size: 17px; line-height: 20px; }
            .clock { width: 88px; line-height: 20px; }
            .centre { width: 53px; }
            .show { width: 6px; border-left: 1px solid #5C7890; }
        `;
    }
    get template() {
        const w = 'stroke="#FFF" fill="none"';
        return `
            <button class="start" aria-label="开始"><svg width="44" height="44"><circle cx="22" cy="22" r="21" fill="#3A6A78" stroke="#9CC0CC" stroke-width="1.500"/>
                <path d="M14 33h16v-4l5-4q3-7-1-8 0-5-5-5-2-4-7-3-5-1-7 3-5 0-5 5-4 1-1 8l5 4z" fill="#2F8C98" stroke="#E8C830" stroke-width="2"/>
                <path d="M22 30V14M20 30l-5-11M24 30l5-11M18 30l-7-6M26 30l7-6" stroke="#0C5870" stroke-width="1.500"/></svg></button>
            <button class="app" aria-label="任务视图"><svg width="22" height="22"><path d="M2.500 5.500h11v11h-11zM2 1v2h12V1M2 21v-2h12v2M18.500 1v6M18.500 13v8" ${w} stroke-width="1.500"/><path d="M17 8h4v4h-4z" fill="#FFF"/></svg></button>
            <button class="app s" aria-label="浏览器"><svg width="28" height="28" fill="#FFF"><circle cx="8" cy="8" r="7.500"/><circle cx="20" cy="8" r="7.500"/><circle cx="8" cy="20" r="7.500"/><circle cx="20" cy="20" r="7.500"/>
                <path d="M14 14Q9 7 15 0M14 14q5 7-1 14M14 14q7-5 14 1M14 14q-7 5-14-1" stroke="#07304E" stroke-width="2" fill="none"/></svg></button>
            <button class="app e" aria-label="Internet Explorer"><svg width="28" height="28"><circle cx="14" cy="14" r="8.500" fill="none" stroke="#2078DC" stroke-width="5"/>
                <path d="M8 14.500h17" stroke="#2078DC" stroke-width="4"/><path d="M18 17h9v4l-6-1z" fill="#07304E"/>
                <path d="M4 26q-6-4 6-16T26 3q1 2-2 5" stroke="#4CA4F4" stroke-width="2" fill="none"/><path d="M38 10v9l5-4.500z" fill="#2078DC"/></svg></button>
            <button class="app g" aria-label="360 浏览器"><svg width="28" height="28"><circle cx="14" cy="14" r="13" fill="#58B828"/><circle cx="14" cy="14" r="7" fill="none" stroke="#FFF" stroke-width="3.500"/><path d="M8 14.500h14" stroke="#FFF" stroke-width="3"/><path d="M17 17h8v4h-7z" fill="#58B828"/><path d="M2 26q-2-9 8-17T27 2" stroke="#D8F4B0" stroke-width="1.500" fill="none"/></svg></button>
            <button class="task"><span>${svg('chip')}</span>PT100示意图 - Mu...</button>
            <div class="space"></div>
            <button class="tray" aria-label="显示隐藏的图标"><svg width="18" height="10"><path d="M1 9l8-8 8 8" ${w} stroke-width="1.500"/></svg></button>
            <button class="tray" aria-label="360"><svg width="20" height="20"><circle cx="10" cy="10" r="10" fill="#F8D818"/><path d="M1 6Q5-1 12 .5q-4 2-4 5-4-2-7 .5zM19 14q-4 7-11 5.500 4-2 4-5 4 2 7-.5z" fill="#28A048"/><path d="M10 6v8M6 10h8" stroke="#28A048" stroke-width="2"/></svg></button>
            <button class="tray" aria-label="音量"><svg width="20" height="18"><path d="M1 6h3l4-4v14l-4-4H1zM11 6q2 3 0 6M14 4q3 5 0 10M17 2q4 7 0 14" ${w} stroke-width="1.300"/></svg></button>
            <button class="tray" aria-label="网络"><svg width="20" height="18"><path d="M4 2.500h15v11H3.500V8M7 16.500h8M11 14v2M.5 1.500h4v5h-4z" ${w} stroke-width="1.300"/></svg></button>
            <button class="tray wide" aria-label="键盘"><svg width="30" height="18"><path d="M.5.5h29v16H.5z" ${w}/><path d="M4 5h22M4 8.500h22M8 12.500h14" stroke="#FFF" stroke-width="1.500" stroke-dasharray="2 1"/></svg></button>
            <button class="ime">中</button>
            <button class="clock">20:05 周六<br>2021/3/13</button>
            <button class="centre" aria-label="通知"><svg width="20" height="20"><path d="M3.500.5h16v18h-16zM3 3H.5v14.500l3 1M7 6h9M7 9.500h9M7 13h5" ${w} stroke-width="1.500"/></svg></button>
            <div class="show">&nbsp;</div>
        `;
    }
}
customElements.define('task-bar', TaskBar);

/**
 * Plot area of the four channel oscilloscope
 */
class ScopePlot extends BaseElement {
    get style_() {
        return `
            :host { display: block; background-color: #000; border: 1px solid #A0A0A0; border-width: 3px 2px; border-top-color: #707070; }
            svg { display: block; width: 100%; height: 418px; }
            path { fill: none; shape-rendering: crispEdges; }
            .grid { stroke: #C8C8C8; stroke-dasharray: 3 3; }
        `;
    }
    get template() {
        let grid = '', ticks = '';
        for (let i = 1; i < 10; i++) grid += `M${Math.round(9 + i * 102.4)}.5 12V410`;
        for (let i = 1; i < 6; i++) if (i !== 3) grid += `M10 ${8 + i * 67}.5H1033`;
        for (let i = 1; i < 50; i++) ticks += `M${Math.round(9 + i * 20.48)}.5 207v6`;
        const handle = (x, y, colour) => `<circle cx="${x}.5" cy="${y}" r="3" fill="none" stroke="${colour}"/>`;
        return `
            <svg viewBox="0 0 1042 418" preserveAspectRatio="none">
                <path class="grid" d="${grid}"/>
                <path d="M9.500 8.500H1033.500V410.500H9.500zM6 209.500H1037M521.500 5v4${ticks}" stroke="#FFF"/>
                <path d="M9 117.500H653" stroke="#3478C8"/>
                <path d="M9 152.500H111.500V198.500H653" stroke="#C81E1E"/>
                <path d="M9 202.500H111.500V249.500H653" stroke="#50C850"/>
                <path d="M9 275.500H111.500V305.500H653" stroke="#E0B458"/>
                <path d="M90.500 3V410" stroke="#30E0E0"/><path d="M592.500 3V410" stroke="#E8E040"/>
                <polygon points="84,2 97,2 90.500,9" fill="#30E0E0"/><polygon points="584,0 601,0 592.500,8" fill="#F4F020"/>
                <text x="88" y="8" font-size="7" font-family="Liberation Sans">1</text><text x="590" y="7" font-size="8" font-family="Liberation Sans">2</text>
                ${handle(90, 301, '#30E0E0')}${handle(592, 325, '#E8E040')}
            </svg>
        `;
    }
}
customElements.define('scope-plot', ScopePlot);

/**
 * A titled group of controls
 */
class ScopeGroup extends BaseElement {
    get style_() {
        return `
            :host { display: block; }
            fieldset {
                min-width: 0;
                height: 114px;
                margin: 0;
                padding: 0 4px 0 6px;
                border: 0 solid #DCDCDC;
                border-width: 1px 0 1px 1px;
            }
            legend { padding: 0 4px 0 1px; margin: 0; font-size: 15px; line-height: 18px; }
        `;
    }
    get template() {
        return `<fieldset><legend>${this.getAttribute('legend')}</legend><slot></slot></fieldset>`;
    }
}
customElements.define('scope-group', ScopeGroup);

/**
 * Oscilloscope window
 */
class ScopeWindow extends BaseElement {
    get style_() {
        return `
            :host {
                display: block;
                width: 1048px;
                border: 1px solid #A0A0A0;
                background-color: #F0F0F0;
                font: 13px/16px "Noto Sans", "Noto Sans CJK SC", sans-serif;
            }
            header {
                display: flex;
                align-items: center;
                justify-content: space-between;
                height: 37px;
                padding: 0 14px 1px 9px;
                background-color: #FFF;
                color: #999;
                font: 15px/20px "Open Sans", "Noto Sans CJK SC", sans-serif;
            }
            button {
                height: 22px;
                padding: 0;
                border: 1px solid #ADADAD;
                background-color: #E1E1E1;
                font: inherit;
                line-height: 18px;
            }
            .on { border-color: #0C5494; background-color: #CCE4F7; }
            button:disabled { border-color: #CCC; background-color: #CCC; color: #909090; }
            header button { width: 16px; border: 0; background: none; line-height: 0; }
            .cjk, label { font-size: 15px; }
            input:not([type]) {
                min-width: 0;
                height: 24px;
                padding: 0 4px;
                border: 1px solid #7A7A7A;
                background-color: #FFF;
                font: inherit;
            }
            input[type=radio] {
                appearance: none;
                flex: none;
                width: 16px;
                height: 18px;
                margin: 0;
                border: 1px solid #CCC;
                border-radius: 50%;
                background-color: #FFF;
            }
            input:checked { background: radial-gradient(#CCC 5px, #F4F4F4 6px); }
            scroll-track { height: 16px; }
            .read { display: grid; grid-template-columns: 63px 1fr 70px; gap: 2px; height: 74px; margin-top: 3px; }
            .cursors {
                display: grid;
                grid-template-columns: 18px 15px 15px;
                grid-template-rows: 18px 18px 16px;
                gap: 4px;
                height: 73px;
                padding: 8px 0 0 5px;
                border: 1px solid #B0B0B0;
                border-left: 0;
            }
            .cursors button { height: 18px; line-height: 0; }
            .cursors .diff { grid-column: span 3; }
            .data { border: 1px solid #FFF; border-top: 2px solid #808080; border-left: 2px solid #808080; background-color: #FFF; }
            table { border-collapse: collapse; table-layout: fixed; width: 480px; }
            th { padding: 0 2px 0 0; font-weight: 400; font-size: 15px; line-height: 17px; }
            td { padding: 0 10px 0 0; text-align: center; }
            .side { display: flex; flex-direction: column; gap: 2px; padding: 0 4px 0 6px; }
            .side label, .ext { display: flex; align-items: center; justify-content: flex-end; gap: 1px; padding: 4px 8px 0 0; font-size: 13px; }
            .groups { display: grid; grid-template-columns: 307px 404px minmax(0, 1fr); padding: 1px 0 7px; }
            .row { display: flex; align-items: center; justify-content: space-between; }
            .buttons { display: flex; align-items: center; gap: 4px; margin: 14px 0 0 -1px; }
            .time { padding-top: 3px; margin: 0 -1px 0 -2px; }
            .channel { display: grid; grid-template-columns: 305px 1fr; padding-top: 1px; }
            .channel + .buttons { margin-top: 22px; }
            .radios { display: flex; gap: 29px; margin-left: 34px; }
            .dial { display: grid; grid-template-columns: 28px 34px 26px; grid-template-rows: 18px 34px 32px; place-items: center; margin: -9px 0 -35px -1px; text-align: center; }
            .trigger { display: grid; grid-template-columns: minmax(0, 1fr); gap: 7px; padding: 1px 6px 0 2px; }
            .trigger button { width: 42px; height: 19px; margin-right: 5px; line-height: 0; }
            .trigger + .buttons { gap: 2px; margin-top: 17px; margin-left: -3px; }
            .trigger .ext { flex: 1; padding: 0 20px 0 0; }
            .trigger label:first-child { width: 117px; padding-left: 7px; }
            .grip {
                position: absolute;
                right: 1px;
                bottom: 1px;
                width: 9px;
                height: 9px;
                background: radial-gradient(#A0A0A0 1px, transparent 1px) 0 0 / 3px 3px;
                clip-path: polygon(100% 0, 100% 100%, 0 100%);
            }
        `;
    }
    get template() {
        const arrow = (label, d) => `<button aria-label="${label}"><svg width="11" height="10"><path d="${d}" stroke="#000" stroke-width="2.500" fill="none"/></svg></button>`;
        const arrows = name => arrow(`${name} 左移`, 'M10 5H2M6 1L2 5l4 4') + arrow(`${name} 右移`, 'M1 5h8M5 1l4 4-4 4');
        const rows = [
            ['4.259 ms', '95.705 mV', '41.015 mV', '1.477 V', '95.233 mV'],
            ['30.652 ms', '94.333 mV', '39.601 mV', '1.478 V', '94.333 mV'],
            ['26.393 ms', '-1.372 mV', '-1.414 mV', '1.143 mV', '-900.168 uV']
        ].map(row => `<tr>${row.map(cell => `<td>${cell}</td>`).join('')}</tr>`).join('');
        return `
            <header>4通道示波器-XSC1<button aria-label="关闭"><svg width="14" height="14"><path d="M1 1l12 12M13 1L1 13" stroke="#999" fill="none"/></svg></button></header>
            <scope-plot></scope-plot>
            <scroll-track></scroll-track>
            <div class="read">
                <div class="cursors">
                    <span>T1</span>${arrows('T1')}
                    <span>T2</span>${arrows('T2')}
                    <span class="diff">T2-T1</span>
                </div>
                <div class="data"><table>
                    <tr><th>时间</th><th>通道_A</th><th>通道_B</th><th>通道_C</th><th>通道_D</th></tr>
                    ${rows}
                </table></div>
                <div class="side">
                    <button class="cjk">反向</button><button class="cjk">保存</button>
                    <label>GND <input type="radio" name="gnd"></label>
                </div>
            </div>
            <div class="groups">
                <scope-group legend="时基">
                    <div class="time">
                        <div class="row"><label for="scale">标度:</label><input id="scale" value="5 ms/Div" style="width:189px"></div>
                        <div class="row"><label for="xpos">X 轴位移(格)：</label><input id="xpos" value="0" style="width:145px"></div>
                    </div>
                    <div class="buttons"><button class="on" style="width:57px">Y/T</button><button style="width:68px">A/B &gt;</button><button style="width:71px">A+B &gt;</button></div>
                </scope-group>
                <scope-group legend="通道_D">
                    <div class="channel">
                        <div>
                            <div class="row"><label for="div">刻度：</label><input id="div" value="2 mV/Div" style="width:194px"></div>
                            <div class="row"><label for="ypos">Y 轴位移(格)：</label><input id="ypos" value="-48.6" style="width:143px"></div>
                        </div>
                        <div class="dial">
                            <i></i><span>A</span><i></i>
                            <span>D</span>
                            <svg width="34" height="34"><circle cx="17" cy="17" r="16.500" fill="#A0A0A0" stroke="#777"/><path d="M17 17L2 22A16 16 0 0 1 25 3z" fill="#E4E4E4"/><path d="M17 17L33 14A16 16 0 0 1 10 32z" fill="#707070"/><path d="M11 31q6 3 12 0" stroke="#000" stroke-width="3" fill="none"/><circle cx="18" cy="17" r="6" fill="#909090" stroke="#DDD"/></svg>
                            <span>B</span>
                            <i></i><span>C</span><i></i>
                        </div>
                    </div>
                    <div class="buttons">
                        <button class="cjk" style="width:49px">交流</button><button style="width:37px">0</button><button class="cjk on" style="width:50px">直流</button><button style="width:31px">-</button>
                        <div class="radios">${['A', 'B', 'C', 'D'].map(c => `<input type="radio" name="ch${c}" aria-label="通道 ${c}" checked disabled>`).join('')}</div>
                    </div>
                </scope-group>
                <scope-group legend="触发">
                    <div class="trigger">
                        <div class="row">
                            <label>边沿：</label>
                            <button class="on" aria-label="上升沿"><svg width="12" height="12"><path d="M1 10.500h5v-9h5M3 6.500h6" ${S}/></svg></button>
                            <button aria-label="下降沿"><svg width="12" height="12"><path d="M1 1.500h5v9h5M3 5.500h6" ${S}/></svg></button>
                            <label class="ext">Ext <input type="radio" name="ext"></label>
                        </div>
                        <div class="row">
                            <label for="level">水平：</label><input id="level" value="0" style="flex:1"><input aria-label="单位" value="V" style="width:39px;margin-left:-1px;padding-left:8px">
                        </div>
                    </div>
                    <div class="buttons">
                        <button class="cjk" style="width:55px">单次</button><button class="cjk" style="width:64px">正常</button><button class="cjk" style="width:56px">自动</button>
                        <button class="cjk on" style="width:50px">无</button><button class="on" style="width:47px">A &gt;</button><button disabled style="width:46px">Ext</button>
                    </div>
                </scope-group>
            </div>
            <div class="grip"></div>
        `;
    }
}
customElements.define('scope-window', ScopeWindow);

/**
 * Whole screen
 */
class AppShell extends BaseElement {
    get style_() {
        return `
            :host { position: relative; display: flex; flex-direction: column; height: 100vh; }
            .work { flex: 1; display: flex; min-height: 0; }
            .left { flex: 1; display: flex; flex-direction: column; min-width: 0; }
            .frame {
                flex: 1;
                display: grid;
                grid-template-columns: 1fr 19px;
                grid-template-rows: 1fr 19px;
                min-height: 0;
                margin: 4px 5px 7px 4px;
                border: 2px solid #808080;
                border-width: 2px 1px 1px 2px;
                border-right-color: #D8D8D8;
                border-bottom-color: #D8D8D8;
            }
            scope-window { position: absolute; left: 775px; top: 263px; }
        `;
    }
    get template() {
        return `
            <title-bar>PT100示意图 - Multisim - [PT100示意图 *]</title-bar>
            <menu-bar></menu-bar>
            <tool-rows></tool-rows>
            <div class="work">
                <div class="left">
                    <div class="frame">
                        <schematic-sheet></schematic-sheet>
                        <scroll-track vertical rest="60%"></scroll-track>
                        <scroll-track rest="30%"></scroll-track>
                    </div>
                    <design-tabs></design-tabs>
                </div>
                <instrument-bar></instrument-bar>
            </div>
            <spreadsheet-view></spreadsheet-view>
            <status-line></status-line>
            <task-bar></task-bar>
            <scope-window></scope-window>
        `;
    }
}
customElements.define('app-shell', AppShell);
</script>
</body>
</html>
